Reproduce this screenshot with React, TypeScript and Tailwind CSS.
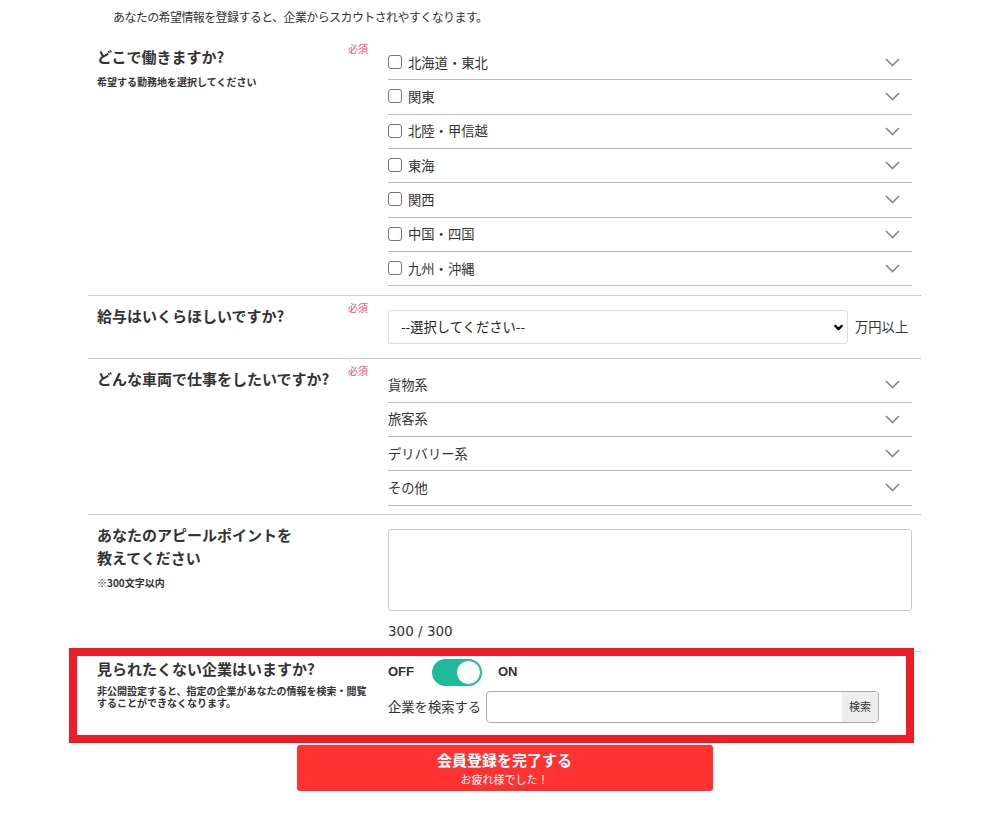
import { ChevronDown } from "lucide-react";

const regions = ["北海道・東北", "関東", "北陸・甲信越", "東海", "関西", "中国・四国", "九州・沖縄"];
const vehicles = ["貨物系", "旅客系", "デリバリー系", "その他"];

function Chevron() {
  return (
    <svg width="15" height="9" viewBox="0 0 15 9" className="mr-[12px] shrink-0">
      <polyline points="1,1 7.5,7.5 14,1" fill="none" stroke="#888" strokeWidth="1.6" />
    </svg>
  );
}

function Required() {
  return <span className="text-[10px] leading-[12px] text-[#f0506e] shrink-0">必須</span>;
}

function LeftHead({ title, required }: { title: string; required?: boolean }) {
  return (
    <div className="flex items-start justify-between">
      <h3 className="mt-[4px] text-[15px] leading-[20px] font-bold">{title}</h3>
      {required && <Required />}
    </div>
  );
}

export default function App() {
  return (
    <div
      className="min-h-screen bg-white text-[#333]"
      style={{ fontFamily: '"Noto Sans CJK JP", "Liberation Sans", sans-serif' }}
    >
      <div className="ml-[88px] w-[833px]">
        <p className="pl-[25px] pt-[8px] pb-[11px] text-[12px] leading-[18px] tracking-[-0.6px]">
          あなたの希望情報を登録すると、企業からスカウトされやすくなります。
        </p>

        {/* 勤務地 */}
        <section className="grid grid-cols-[300px_1fr] border-b border-[#ccc]">
          <div className="pl-[9px] pr-[20px] pt-[6px]">
            <LeftHead title="どこで働きますか?" required />
            <p className="mt-[8px] text-[10px] leading-[14px] font-bold">希望する勤務地を選択してください</p>
          </div>
          <div className="pr-[9px] pt-[9px] pb-[9px]">
            {regions.map((r) => (
              <div key={r} className="h-[34.33px] border-b border-[#bbb] flex items-center justify-between">
                <label className="flex items-center gap-[6px] text-[13.3px]">
                  <input
                    type="checkbox"
                    className="appearance-none w-[14px] h-[14px] -mt-[1px] border border-[#767676] rounded-[3px] bg-white"
                  />
                  {r}
                </label>
                <Chevron />
              </div>
            ))}
          </div>
        </section>

        {/* 給与 */}
        <section className="grid grid-cols-[300px_1fr] border-b border-[#ccc]">
          <div className="pl-[9px] pr-[20px] pt-[6px]">
            <LeftHead title="給与はいくらほしいですか?" required />
          </div>
          <div className="pr-[9px] pt-[14px] pb-[14px] flex items-center gap-[7px]">
            <div className="relative w-[460px]">
              <select className="appearance-none w-full h-[34px] border border-[#ddd] rounded-[3px] bg-white pl-[12px] text-[13.3px] text-[#222] outline-none">
                <option>--選択してください--</option>
              </select>
              <ChevronDown size={13} strokeWidth={4} className="absolute right-[3px] top-[11px] text-black pointer-events-none" />
            </div>
            <span className="text-[13.3px]">万円以上</span>
          </div>
        </section>

        {/* 車両 */}
        <section className="grid grid-cols-[300px_1fr] border-b border-[#ccc]">
          <div className="pl-[9px] pr-[20px] pt-[6px]">
            <LeftHead title="どんな車両で仕事をしたいですか?" required />
          </div>
          <div className="pr-[9px] pt-[9px] pb-[8px]">
            {vehicles.map((v) => (
              <div key={v} className="h-[34.33px] border-b border-[#bbb] flex items-center justify-between">
                <span className="text-[13.3px]">{v}</span>
                <Chevron />
              </div>
            ))}
          </div>
        </section>

        {/* アピールポイント */}
        <section className="grid grid-cols-[300px_1fr] border-b border-[#ccc]">
          <div className="pl-[9px] pr-[20px] pt-[8px]">
            <h3 className="text-[15px] leading-[23px] font-bold">
              あなたのアピールポイントを
              <br />
              教えてください
            </h3>
            <p className="mt-[7px] text-[10px] leading-[14px] font-bold">※300文字以内</p>
          </div>
          <div className="pr-[9px] pt-[14px] pb-[10px]">
            <textarea className="block w-full h-[82px] border border-[#ccc] rounded-[3px] resize-none outline-none" />
            <p
              className="mt-[10px] text-[13.5px] leading-[20px]"
              style={{ fontFamily: '"DejaVu Sans", sans-serif' }}
            >
              300 / 300
            </p>
          </div>
        </section>

        {/* 非公開設定 */}
        <section className="relative grid grid-cols-[300px_1fr]">
          <div className="pl-[9px] pr-[20px] pt-[7px]">
            <h3 className="text-[15px] leading-[20px] font-bold">見られたくない企業はいますか?</h3>
            <p className="mt-[6px] text-[10px] leading-[12px] font-bold">
              非公開設定すると、指定の企業があなたの情報を検索・閲覧することができなくなります。
            </p>
          </div>
          <div className="pr-[9px] pt-[7px] pb-[12px]">
            <div className="flex items-center h-[27px]" style={{ fontFamily: '"Liberation Sans", sans-serif' }}>
              <span className="w-[44px] text-[13px] font-bold">OFF</span>
              <button
                type="button"
                className="w-[50px] h-[27px] rounded-full bg-[#1fba9b] flex items-center justify-end p-[1px]"
                aria-label="非公開設定"
              >
                <span className="w-[25px] h-[25px] rounded-full bg-white border border-[#1fba9b]" />
              </button>
              <span className="ml-[16px] text-[13px] font-bold">ON</span>
            </div>
            <div className="mt-[5px] flex items-center gap-[5px]">
              <span className="text-[13.3px]">企業を検索する</span>
              <div className="w-[393px] h-[32px] border border-[#aaa] rounded-[4px] overflow-hidden flex">
                <input className="flex-1 min-w-0 outline-none px-2 text-[13px]" />
                <button type="button" className="w-[36px] bg-[#eee] text-[11px] text-[#333]">
                  検索
                </button>
              </div>
            </div>
          </div>
          {/* 強調枠 */}
          <div className="absolute -top-[4px] -left-[19px] right-[7px] -bottom-[8px] border-[8px] border-[#ee1c25] pointer-events-none" />
        </section>

        <div className="mt-[10px] flex justify-center">
          <button
            type="button"
            className="w-[416px] h-[46px] rounded-[3px] bg-[#ff3131] text-white flex flex-col items-center pt-[5px]"
          >
            <span className="text-[15px] leading-[20px] font-bold">会員登録を完了する</span>
            <span className="mt-[2px] text-[11px] leading-[14px]">お疲れ様でした！</span>
          </button>
        </div>
      </div>
    </div>
  );
}
